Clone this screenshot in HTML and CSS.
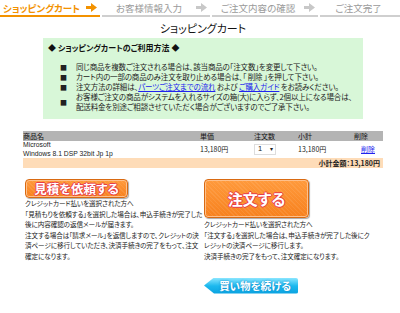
FILE: index.html
```html
<!DOCTYPE html>
<html lang="ja">
<head>
<meta charset="utf-8">
<title>ショッピングカート</title>
<link rel="stylesheet" href="styles.css">
</head>
<body>
<nav class="steps">
  <div class="step step-active"><span class="step-label">ショッピングカート</span><svg class="step-arrow" width="11" height="9" viewBox="0 0 11 9"><path d="M0 3h5V0l6 4.5L5 9V6H0z"/></svg></div>
  <div class="step"><span class="step-label">お客様情報入力</span><svg class="step-arrow" width="11" height="9" viewBox="0 0 11 9"><path d="M0 3h5V0l6 4.5L5 9V6H0z"/></svg></div>
  <div class="step"><span class="step-label">ご注文内容の確認</span><svg class="step-arrow" width="11" height="9" viewBox="0 0 11 9"><path d="M0 3h5V0l6 4.5L5 9V6H0z"/></svg></div>
  <div class="step step-last"><span class="step-label">ご注文完了</span></div>
</nav>

<main class="content">
  <h1 class="page-title">ショッピングカート</h1>

  <section class="guide">
    <h2 class="guide-title">◆ ショッピングカートのご利用方法 ◆</h2>
    <ul class="guide-list">
      <li><span class="sq">■</span><span>同じ商品を複数ご注文される場合は、該当商品の「注文数」を変更して下さい。</span></li>
      <li><span class="sq">■</span><span>カート内の一部の商品のみ注文を取り止める場合は、「 削除 」を押して下さい。</span></li>
      <li><span class="sq">■</span><span>注文方法の詳細は、<a href="#">パーツご注文までの流れ</a> および <a href="#">ご購入ガイド</a> をお読みください。</span></li>
      <li><span class="sq">■</span><span>お客様ご注文の商品がシステムを入れるサイズの箱(大)に入らず、2個以上になる場合は、<br>配送料金を別途ご相談させていただく場合がございますのでご了承下さい。</span></li>
    </ul>
  </section>

  <table class="cart">
    <thead>
      <tr>
        <th class="c-name">商品名</th>
        <th class="c-price">単価</th>
        <th class="c-qty">注文数</th>
        <th class="c-sub">小計</th>
        <th class="c-del">削除</th>
      </tr>
    </thead>
    <tbody>
      <tr class="item">
        <td class="c-name latin">Microsoft<br>Windows 8.1 DSP 32bit Jp 1p</td>
        <td class="c-price">13,180円</td>
        <td class="c-qty"><span class="select">1<span class="caret">▾</span></span></td>
        <td class="c-sub">13,180円</td>
        <td class="c-del"><a href="#">削除</a></td>
      </tr>
      <tr class="total">
        <td colspan="5">小計金額：13,180円</td>
      </tr>
    </tbody>
  </table>

  <div class="actions">
    <div class="action-col">
      <a href="#" class="btn btn-quote">見積を依頼する</a>
      <p class="note">クレジットカード払いを選択された方へ<br>「見積もりを依頼する」を選択した場合は、申込手続きが完了した<br>後に内容確認の返信メールが届きます。<br>注文する場合は「請求メール」を返信しますので、クレジットの決<br>済ページに移行していただき、決済手続きの完了をもって、注文<br>確定になります。</p>
    </div>
    <div class="action-col">
      <a href="#" class="btn btn-order">注文する</a>
      <p class="note">クレジットカード払いを選択された方へ<br>「注文する」を選択した場合は、申込手続きが完了した後にク<br>レジットの決済ページに移行します。<br>決済手続きの完了をもって、注文確定になります。</p>
    </div>
  </div>

  <div class="continue-row">
    <a href="#" class="btn-continue">買い物を続ける</a>
  </div>
</main>
</body>
</html>
```

FILE: styles.css
```css
* { box-sizing: border-box; }

body {
  margin: 0;
  width: 400px;
  background: #fff;
  color: #222;
  font-family: "Noto Sans CJK JP", "Liberation Sans", sans-serif;
  font-feature-settings: "palt";
  font-size: 7.5px;
}

a { color: #2222ee; }

/* steps */
.steps {
  display: flex;
  gap: 2px;
  height: 17px;
}
.step {
  display: flex;
  align-items: center;
  border-bottom: 2px solid #cfcfcf;
  color: #9a9a9a;
  font-size: 9.5px;
  line-height: 12px;
  padding-right: 3px;
}
.step:nth-child(1) { width: 100px; }
.step:nth-child(2) { width: 108px; }
.step:nth-child(3) { width: 106px; }
.step:nth-child(4) { flex: 1; }
.step-label { flex: 1; text-align: center; }
.step-arrow { fill: #c8c8c8; }
.step-active {
  border-bottom-color: #f39200;
  color: #f39200;
  font-weight: bold;
}
.step-active .step-arrow { fill: #f39200; }
.step-active .step-label { text-align: left; padding-left: 3px; }

/* content */
.content {
  width: 360px;
  margin-left: 23px;
}
.page-title {
  margin: 4px 0 0;
  text-align: center;
  font-size: 11px;
  font-weight: normal;
  line-height: 14px;
  color: #111;
}

.guide {
  margin: 3px 0 0 20px;
  width: 320px;
  height: 81px;
  background: #d8f7d8;
  padding: 5px 0 0;
}
.guide-title {
  margin: 0 0 0 5px;
  font-size: 8px;
  font-weight: bold;
  line-height: 10px;
  color: #111;
}
.guide-list {
  list-style: none;
  margin: 9px 0 0;
  padding: 0;
}
.guide-list li {
  display: flex;
  align-items: center;
  line-height: 10px;
  color: #222;
  letter-spacing: -0.15px;
  white-space: nowrap;
}
.sq {
  width: 33px;
  padding-left: 17px;
  font-size: 7px;
  letter-spacing: 0;
}

/* cart table */
.cart {
  margin-top: 12px;
  width: 360px;
  border-collapse: collapse;
  font-size: 7px;
}
.cart th {
  background: #b4b4b4;
  text-align: left;
  font-weight: normal;
  color: #111;
  height: 10px;
  padding: 0;
  line-height: 10px;
}
.cart td {
  padding: 0;
  text-align: left;
}
.c-name { width: 177px; }
.c-price { width: 54px; }
.c-qty { width: 44px; }
.c-sub { width: 56px; }
.item td { height: 17px; line-height: 8.5px; }
.latin { font-family: "Liberation Sans", sans-serif; font-size: 6.8px; padding-top: 1px; }
.item .c-del { padding-left: 7px; }
.select {
  display: inline-flex;
  justify-content: space-between;
  align-items: center;
  width: 22px;
  height: 11px;
  border: 1px solid #ddd;
  padding: 0 2px 0 3px;
  font-family: "Liberation Sans", sans-serif;
  font-size: 7.5px;
}
.caret { font-size: 6px; }
.total td {
  background: #fedcb8;
  text-align: right;
  font-weight: bold;
  height: 10px;
  line-height: 10px;
  padding-right: 3px;
}

/* actions */
.actions {
  display: flex;
  margin-top: 11px;
}
.action-col:first-child { width: 181px; padding-left: 2px; }
.action-col:last-child { flex: 1; }
.btn {
  display: flex;
  align-items: center;
  justify-content: center;
  color: #fff;
  font-weight: bold;
  text-decoration: none;
  border: 1px solid #d96a12;
  border-radius: 4px;
  box-shadow: inset 0 0 0 1px #ffc08a, 1px 1px 1px #aaa;
  background:
    repeating-linear-gradient(45deg, rgba(255,255,255,0.08) 0 1px, rgba(255,255,255,0) 1px 3px),
    linear-gradient(#ff9a3c, #f7811e);
  text-shadow: 1px 0 0 #e83c4a, -1px 0 0 #e83c4a, 0 1px 0 #e83c4a, 0 -1px 0 #e83c4a;
}
.btn-quote {
  width: 103px;
  height: 19px;
  font-size: 12.5px;
}
.btn-order {
  width: 105px;
  height: 39px;
  font-size: 15px;
}
.note {
  margin: 0;
  font-size: 6.6px;
  line-height: 10.6px;
  color: #222;
  white-space: nowrap;
  letter-spacing: -0.1px;
}
.action-col:last-child .note { margin-top: 1px; }

/* continue */
.continue-row {
  margin-top: 16px;
  padding-left: 181px;
}
.btn-continue {
  display: flex;
  align-items: center;
  justify-content: center;
  width: 94px;
  height: 16px;
  padding-left: 8px;
  color: #fff;
  font-size: 10.5px;
  font-weight: bold;
  text-decoration: none;
  background: linear-gradient(#8ae6ff, #1cb8ee 50%, #0aa2e0);
  clip-path: polygon(0 50%, 10px 0, 100% 0, 100% 100%, 10px 100%);
  border-radius: 2px;
  text-shadow: 0 0 2px #0a7fc0;
}
```
